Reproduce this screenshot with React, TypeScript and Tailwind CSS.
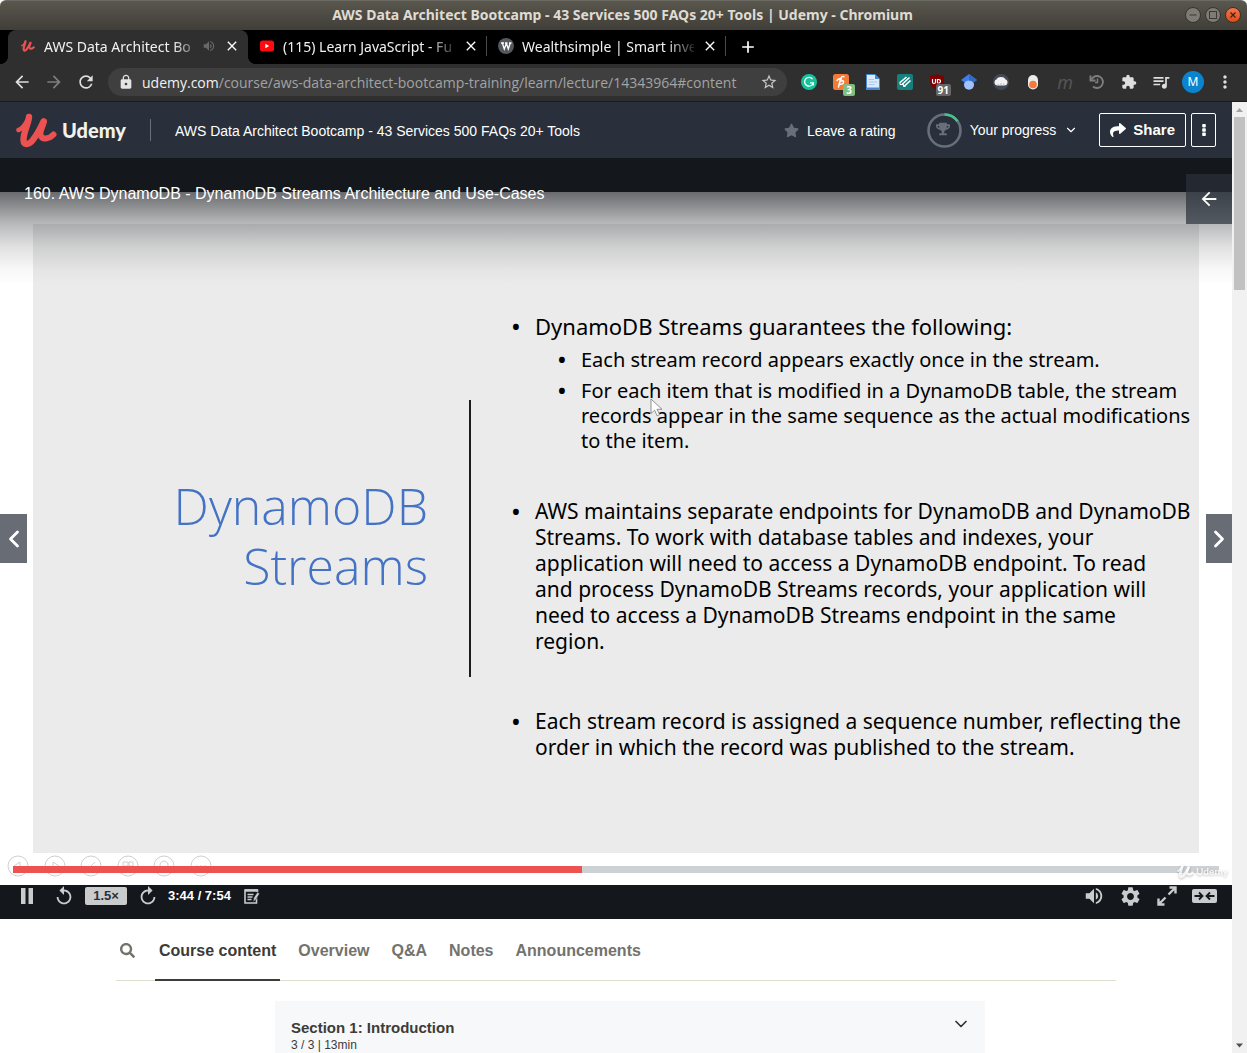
import React from "react";
import {
  MdAdd,
  MdArrowBack,
  MdArrowForward,
  MdClose,
  MdExtension,
  MdLock,
  MdMoreVert,
  MdQueueMusic,
  MdRefresh,
  MdReplay,
  MdSettings,
  MdStarBorder,
  MdVolumeUp,
} from "react-icons/md";
import { FaSearch, FaShare, FaStar, FaTrophy } from "react-icons/fa";
import { ChevronDown, ChevronLeft, ChevronRight } from "lucide-react";

function UdemyMark({ className }: { className: string }) {
  return (
    <svg viewBox="0 0 41 35" className={className} fill="none" aria-hidden="true">
      <g stroke="currentColor" strokeLinecap="round" strokeLinejoin="round">
        <path d="M2.5 17 C7.500 15.500 10.500 9 13.500 3.500" strokeWidth="4.500" />
        <path d="M13 4 C12.500 11 7.500 19 7.500 26.500 C7.500 32.500 12.500 32 16 28 C21 22 24.500 15 27.500 8.500" strokeWidth="6.400" />
        <path d="M28 8.500 C27 13.500 23.500 18 24.500 22 C26 27.500 33 26 37.500 21.500" strokeWidth="6" />
      </g>
    </svg>
  );
}

/* ---------- Window frame ---------- */

function TitleBar() {
  return (
    <header className="flex h-[30px] shrink-0 items-center rounded-t-md border-t border-[#6b6a62] bg-linear-to-b from-[#5a574e] to-[#403e38] pr-1.5 pb-0.5">
      <h1 className="flex-1 pl-[60px] text-center font-['Noto_Sans'] text-[14px] font-bold text-[#dfdbd2]">
        AWS Data Architect Bootcamp - 43 Services 500 FAQs 20+ Tools | Udemy - Chromium
      </h1>
      <div className="flex gap-1">
        <button aria-label="Minimise" className="size-4 rounded-full border border-[#35342f] bg-[#7d7b73] text-[#3a3934]">
          <svg viewBox="0 0 14 14"><path d="M3.5 7h7" stroke="currentColor" /></svg>
        </button>
        <button aria-label="Maximise" className="size-4 rounded-full border border-[#35342f] bg-[#7d7b73] text-[#3a3934]">
          <svg viewBox="0 0 14 14"><rect x="3.5" y="3.5" width="7" height="7" fill="none" stroke="currentColor" /></svg>
        </button>
        <button aria-label="Close window" className="size-4 rounded-full border border-[#43301f] bg-linear-to-b from-[#f4754b] to-[#df4b1a] text-[#4b2010]">
          <svg viewBox="0 0 14 14"><path d="M4.5 4.5l5 5M9.5 4.5l-5 5" stroke="currentColor" strokeWidth="1.3" /></svg>
        </button>
      </div>
    </header>
  );
}

function Tab({ icon, title, active, audio }: { icon: React.ReactNode; title: string; active?: boolean; audio?: boolean }) {
  return (
    <div
      className={
        active
          ? "relative flex h-full w-60 items-center gap-2 rounded-t-lg bg-[#2f2f2f] pr-2 pb-0.5 pl-3"
          : "relative flex h-full w-[239px] items-center gap-2 pr-2 pb-0.5 pl-[11px] after:absolute after:right-0 after:h-5 after:w-px after:bg-[#4a4a4a]"
      }
    >
      {active && (
        <>
          <span className="absolute bottom-0 -left-2 size-2 bg-[radial-gradient(circle_at_0_0,transparent_8px,#2f2f2f_8px)]" />
          <span className="absolute -right-2 bottom-0 size-2 bg-[radial-gradient(circle_at_100%_0,transparent_8px,#2f2f2f_8px)]" />
        </>
      )}
      <span className="flex size-4 shrink-0 items-center justify-center">{icon}</span>
      <button className="min-w-0 flex-1 overflow-hidden text-left text-[14px] whitespace-nowrap text-[#f1f1f1] [mask-image:linear-gradient(to_right,black_84%,rgba(0,0,0,0.15))]">
        {title}
      </button>
      {audio && (
        <button aria-label="Mute tab" className="-ml-1 text-[#68696b]">
          <MdVolumeUp className="size-3.5" />
        </button>
      )}
      <button aria-label="Close tab" className="flex size-4 shrink-0 items-center justify-center text-white">
        <MdClose className="size-4" />
      </button>
    </div>
  );
}

function TabStrip() {
  return (
    <nav aria-label="Browser tabs" className="flex h-[34px] shrink-0 items-center bg-black pl-2">
      <Tab active audio title="AWS Data Architect Bo" icon={<UdemyMark className="w-3.5 text-[#ec5252]" />} />
      <Tab
        title="(115) Learn JavaScript - Fu"
        icon={
          <svg viewBox="0 0 16 16" className="size-4">
            <rect x="1" y="2.5" width="14" height="11" rx="2.5" fill="#ff0a0f" />
            <path d="M6.3 5.8v4.4L10.2 8z" fill="#fff" />
          </svg>
        }
      />
      <Tab
        title="Wealthsimple | Smart inve"
        icon={
          <svg viewBox="0 0 16 16" className="size-4">
            <circle cx="8" cy="8" r="8" fill="#54575c" />
            <path d="M3 5h3M7 5h2.500M11 5h2.500M4.300 5l2 6 2-5.500M8.300 5l2 6 2-6" fill="none" stroke="#fff" strokeWidth="1.300" />
          </svg>
        }
      />
      <button aria-label="New tab" className="ml-3 text-white">
        <MdAdd className="size-5" />
      </button>
    </nav>
  );
}

function Tool({ label, children }: { label: string; children: React.ReactNode }) {
  return (
    <button aria-label={label} className="relative flex h-8 w-8 shrink-0 items-center justify-center text-[#dedede]">
      {children}
    </button>
  );
}

function Toolbar() {
  return (
    <div className="flex h-[38px] shrink-0 items-center border-b border-[#1b1b1b] bg-[#2f2f2f] px-1.5 pb-px">
      <Tool label="Back"><MdArrowBack className="size-5" /></Tool>
      <Tool label="Forward"><MdArrowForward className="size-5 text-[#7e7e7e]" /></Tool>
      <Tool label="Reload"><MdRefresh className="size-5" /></Tool>
      <div className="mx-1.5 flex h-7 min-w-0 flex-1 items-center rounded-full bg-[#3f3f3f] pr-[9px] pl-2.5">
        <MdLock className="size-4 shrink-0 text-[#e4e4e4]" />
        <a href="#content" className="min-w-0 flex-1 truncate pl-2 font-['Open_Sans'] text-[14px] text-[#a3a3a3]">
          <span className="text-[#f2f2f2]">udemy.com</span>
          /course/aws-data-architect-bootcamp-training/learn/lecture/14343964#content
        </a>
        <button aria-label="Bookmark this page" className="text-[#c8c8c8]"><MdStarBorder className="size-[18px]" /></button>
      </div>
      <Tool label="Grammarly">
        <svg viewBox="0 0 16 16" className="size-4">
          <circle cx="8" cy="8" r="8" fill="#15c39a" />
          <path d="M11.600 5.200A4.400 4.400 0 1 0 12.300 8.800H9M12.300 8.800V11.400" fill="none" stroke="#fff" strokeWidth="1.300" />
        </svg>
      </Tool>
      <Tool label="Honey">
        <svg viewBox="0 0 16 16" className="size-4">
          <rect width="16" height="16" rx="2.5" fill="#f47b36" />
          <path d="M5.500 13l2-8.500M7 8c2-2 4-1.500 3.500.5C10 10.500 7.500 10.500 6.500 10M4 6.500c1-1.500 3-2 4.500-1.500M8 4c.5-1.500 2-2 3-1.200" fill="none" stroke="#fff" strokeWidth="1.400" strokeLinecap="round" />
        </svg>
        <span className="absolute right-0.5 bottom-0.5 rounded-[2px] bg-[#7fbf7f] px-[3px] text-[10px] leading-3 font-bold text-white">3</span>
      </Tool>
      <Tool label="Documents">
        <svg viewBox="0 0 16 16" className="size-4">
          <path d="M1.500.5H10l4.500 4.500v10.500h-13z" fill="#dcebfb" stroke="#4a86d0" />
          <path d="M10 .5V5h4.500z" fill="#4a86d0" />
          <path d="M3.500 5.500H9M3.500 8h9M3.500 10.500h6" stroke="#a9c9ee" />
          <path d="M1 13.500h14V16H1z" fill="#4a86d0" />
        </svg>
      </Tool>
      <Tool label="Highlighter">
        <svg viewBox="0 0 16 16" className="size-4">
          <rect width="16" height="16" rx="2" fill="#15807c" />
          <path d="M3 8.500l6.500-5.500M5 10.500l7.500-7M7 12.500l6.500-6" stroke="#fff" strokeWidth="1.600" />
          <path d="M3 8v2.500h3.500v2h2" fill="none" stroke="#fff" />
        </svg>
      </Tool>
      <Tool label="uBlock Origin">
        <svg viewBox="0 0 16 16" className="size-4">
          <path d="M8 0c2 1 4.500 1.500 7 1.500V7c0 4.500-3 7.500-7 9-4-1.500-7-4.500-7-9V1.500C3.500 1.500 6 1 8 0z" fill="#800000" />
          <path d="M3.500 5v3c0 2 3 2 3 0V5M8.500 9.300V5.500h1c2.600 0 2.600 3.600 0 3.600" fill="none" stroke="#fff" strokeWidth="1.200" />
        </svg>
        <span className="absolute right-0.5 bottom-0.5 rounded-[2px] bg-[#666] px-0.5 text-[10px] leading-3 font-bold text-white">91</span>
      </Tool>
      <Tool label="Scholar">
        <svg viewBox="0 0 16 16" className="size-4">
          <circle cx="8" cy="10.800" r="5" fill="#a0c3ff" />
          <path d="M8 0L16 6l-3.500 2.500C10 5.800 6 5.800 3.500 8.500L0 6z" fill="#3f7de8" />
          <path d="M8 0L16 6l-3.500 2.500C11 7 9.500 6.500 8 6.500z" fill="#356ac3" />
        </svg>
      </Tool>
      <Tool label="Shell">
        <svg viewBox="0 0 16 16" className="size-4">
          <circle cx="8" cy="8" r="8" fill="#424a55" />
          <path d="M1.500 8.500c0-2 1-3 2-3 .5-1.700 2.500-2.500 4.500-2.500s4 .8 4.500 2.500c1 0 2 1 2 3 0 1.800-1.500 3-3 3h-7c-1.500 0-3-1.200-3-3z" fill="#f2f2f2" />
          <path d="M8 11.500V9M5.500 11.500L5 9.500M10.500 11.500l.5-2" stroke="#a5a9af" strokeWidth=".8" />
        </svg>
      </Tool>
      <Tool label="Toggle">
        <svg viewBox="0 0 16 16" className="size-4">
          <rect x="3" y="1" width="10" height="14.500" rx="5" fill="#ecebea" />
          <circle cx="8" cy="10.500" r="3.800" fill="#f4793b" />
        </svg>
      </Tool>
      <Tool label="Mercury"><span className="text-[18px] leading-none text-[#555] italic">m</span></Tool>
      <Tool label="History">
        <svg viewBox="0 0 16 16" className="size-4" fill="none" stroke="#7e7e7e" strokeWidth="1.900">
          <path d="M2.500 5.500A6 6 0 1 1 4 12.500" />
          <path d="M1.500 1.500v5h5" />
          <path d="M8.500 4.500v4H6" strokeWidth="1.500" />
        </svg>
      </Tool>
      <Tool label="Extensions"><MdExtension className="size-4" /></Tool>
      <Tool label="Media controls"><MdQueueMusic className="size-5" /></Tool>
      <Tool label="Profile">
        <span className="flex size-[22px] items-center justify-center rounded-full bg-[#0b84d0] text-[12px] text-white">M</span>
      </Tool>
      <Tool label="Menu"><MdMoreVert className="size-5" /></Tool>
    </div>
  );
}

/* ---------- Course page ---------- */

function CourseHeader() {
  return (
    <header className="flex h-14 items-center bg-[#29303b] px-4 text-[14px] text-white">
      <a href="#home" className="flex items-center gap-[5px]">
        <UdemyMark className="w-[41px] text-[#ec5252]" />
        <span className="font-['Lato'] text-[20px] font-black text-[#f2f1ec]">Udemy</span>
      </a>
      <span className="mx-6 h-[22px] w-px bg-[#686f7a]" />
      <a href="#course" className="flex-1 truncate pt-0.5">AWS Data Architect Bootcamp - 43 Services 500 FAQs 20+ Tools</a>
      <button className="flex items-center gap-2">
        <FaStar className="size-[15px] text-[#686f7a]" />
        <span className="pt-0.5">Leave a rating</span>
      </button>
      <button className="ml-[31px] flex items-center gap-2">
        <svg viewBox="0 0 35 35" className="size-[35px]" fill="none">
          <circle cx="17.500" cy="17.500" r="16" stroke="#686f7a" strokeWidth="2.600" />
          <path d="M17.500 1.500A16 16 0 0 1 30.500 8.200" stroke="#46c28e" strokeWidth="2.600" />
          <FaTrophy x="9" y="9" width="17" height="17" color="#686f7a" />
        </svg>
        Your progress
        <ChevronDown className="size-3.5" />
      </button>
      <button className="ml-[21px] flex h-[34px] items-center gap-[7px] rounded-[2px] border border-white px-2.5 text-[15px] font-bold">
        <FaShare className="size-4" />
        Share
      </button>
      <button aria-label="More options" className="ml-[5px] flex h-[34px] w-[25px] items-center justify-center rounded-[2px] border border-white">
        <svg viewBox="0 0 4 14" className="h-3.5" fill="currentColor">
          <rect x=".2" y="1" width="3.600" height="3.400" rx=".8" />
          <rect x=".2" y="5.300" width="3.600" height="3.400" rx=".8" />
          <rect x=".2" y="9.600" width="3.600" height="3.400" rx=".8" />
        </svg>
      </button>
    </header>
  );
}

const bullet = "relative before:absolute before:-left-6 before:top-0 before:text-[26px] before:content-['•']";

function Slide() {
  return (
    <div className="flex aspect-[1166/629] items-center bg-[#ebebeb] font-['Noto_Sans'] text-black">
      <h2 className="w-[395px] pb-1.5 text-right font-['Open_Sans'] text-[50px] leading-[60px] font-light text-[#4472c4]">
        DynamoDB
        <br />
        Streams
      </h2>
      <div className="ml-[41px] h-[277px] w-0.5 bg-[#1d1d1d]" />
      <ul className="ml-16 flex-1 pb-1 text-[21px] leading-[26px] whitespace-nowrap">
        <li className={bullet}>
          <span className="text-[22px]">DynamoDB Streams guarantees the following:</span>
          <ul className="mt-[7px] pl-[46px] text-[20px] leading-[25px]">
            <li className={bullet}>Each stream record appears exactly once in the stream.</li>
            <li className={bullet + " mt-1.5"}>
              For each item that is modified in a DynamoDB table, the stream
              <br />
              records appear in the same sequence as the actual modifications
              <br />
              to the item.
            </li>
          </ul>
        </li>
        <li className={bullet + " mt-[45px]"}>
          AWS maintains separate endpoints for DynamoDB and DynamoDB
          <br />
          Streams. To work with database tables and indexes, your
          <br />
          application will need to access a DynamoDB endpoint. To read
          <br />
          and process DynamoDB Streams records, your application will
          <br />
          need to access a DynamoDB Streams endpoint in the same
          <br />
          region.
        </li>
        <li className={bullet + " mt-[54px]"}>
          Each stream record is assigned a sequence number, reflecting the
          <br />
          order in which the record was published to the stream.
        </li>
      </ul>
    </div>
  );
}

const presenterIcons = [
  "M13 7L7 11l6 4z",
  "M9 7l6 4-6 4z",
  "M7 15l8-8M6 16l3-1",
  "M6 7h5v4H6zM12 7h4v4h-4zM7 13h8",
  "M11 6a4 4 0 1 0 .1 0M14 13l3 3",
  "M6 11h2M10 11h2M14 11h2",
];

function Player() {
  return (
    <section aria-label="Video player" className="relative bg-[#14171c]">
      <div className="h-[34px]" />
      <div className="relative bg-white px-[33px] py-8">
        <Slide />
        <div className="absolute bottom-2 left-[7px] flex w-[205px] justify-between">
          {presenterIcons.map((d) => (
            <svg key={d} viewBox="0 0 22 22" className="w-[22px]" fill="none" stroke="#cfcfcf">
              <circle cx="11" cy="11" r="10" />
              <path d={d} />
            </svg>
          ))}
        </div>
        <input
          type="range"
          aria-label="Seek"
          defaultValue={47}
          className="absolute bottom-3 left-[13px] h-[7px] w-[calc(100%-26px)] appearance-none bg-[linear-gradient(to_right,#ec5252_47.2%,#ced1d4_47.2%)] [&::-webkit-slider-thumb]:size-0 [&::-webkit-slider-thumb]:appearance-none"
        />
        <div className="absolute right-1 bottom-1.5 flex items-center gap-0.5 text-white/80 drop-shadow-[0_1px_1px_rgba(0,0,0,0.3)]">
          <UdemyMark className="w-[17px]" />
          <span className="font-['Lato'] text-[10px] font-black">Udemy</span>
        </div>
        <svg viewBox="0 0 14 20" className="absolute top-[206px] left-[650px] w-3.5">
          <path d="M1 1v14.500l3.600-3.300 2.500 5.600 2.500-1.100-2.500-5.400H12z" fill="#fff" stroke="#777" strokeWidth=".8" />
        </svg>
      </div>
      <div className="flex h-[34px] items-start pr-[15px] pl-[18px] text-[#cacbcd]">
        <div className="flex h-[22px] flex-1 items-center">
          <button aria-label="Pause" className="flex w-[18px] justify-center">
            <svg viewBox="0 0 12 16" className="h-4" fill="currentColor"><path d="M0 0h4.500v16H0zM7.500 0H12v16H7.500z" /></svg>
          </button>
          <button aria-label="Rewind 15 seconds" className="ml-[17px]"><MdReplay className="size-[22px]" /></button>
          <button className="ml-[10px] h-[18px] w-[42px] rounded-[2px] bg-[#cacbcd] text-[13px] leading-[18px] font-bold text-[#29303b]">1.5×</button>
          <button aria-label="Forward 15 seconds" className="ml-[10px]"><MdReplay className="size-[22px] -scale-x-100" /></button>
          <span className="ml-[9px] text-[13px] font-bold text-white">3:44 / 7:54</span>
          <button aria-label="Add note" className="ml-[13px]">
            <svg viewBox="0 0 16 15" className="w-4" fill="none" stroke="currentColor">
              <path d="M12.500 8.500V14H1V1h12.500v2" strokeWidth="1.600" />
              <path d="M1 1.500h12.500" strokeWidth="2.500" />
              <path d="M3.500 5.500h6M3.500 8h5M3.500 10.500h4" strokeWidth="1.300" />
              <path d="M9 13l1-4.500 3.500-5.500 2 1.800-3.500 5.700z" fill="currentColor" stroke="#14171c" strokeWidth=".5" />
            </svg>
          </button>
        </div>
        <div className="flex h-[22px] items-center">
          <button aria-label="Volume"><MdVolumeUp className="size-[22px]" /></button>
          <button aria-label="Settings" className="ml-[14px]"><MdSettings className="size-[23px]" /></button>
          <button aria-label="Full screen" className="ml-[15px]">
            <svg viewBox="0 0 20 20" className="w-5" fill="none" stroke="currentColor" strokeWidth="2.400">
              <path d="M12.500 1.500h6v6M18 2l-6.500 6.500M7.500 18.500h-6v-6M2 18l6.500-6.500" />
            </svg>
          </button>
          <button aria-label="Exit expanded view" className="ml-[15px]">
            <svg viewBox="0 0 25 14" className="w-[25px]">
              <rect width="25" height="14" rx="2" fill="currentColor" />
              <path d="M2.500 7h8M7 3.500L10.500 7 7 10.500M22.500 7h-8M18 3.500L14.500 7l3.500 3.500" fill="none" stroke="#14171c" strokeWidth="1.800" />
            </svg>
          </button>
        </div>
      </div>

      <div className="absolute inset-x-0 top-0 h-[127px] bg-[linear-gradient(to_bottom,rgba(20,23,28,0.9)_0%,rgba(20,23,28,0.64)_27%,rgba(20,23,28,0.31)_51%,rgba(20,23,28,0.13)_70%,rgba(20,23,28,0.03)_88%,transparent)]">
        <h2 className="px-6 pt-[25px] text-[16px] leading-[22px] text-white">
          160. AWS DynamoDB - DynamoDB Streams Architecture and Use-Cases
        </h2>
      </div>
      <button aria-label="Open course sidebar" className="absolute top-4 right-0 flex h-[50px] w-[46px] items-center justify-center bg-[#29303b]/70 text-white">
        <MdArrowBack className="size-[22px]" />
      </button>
      <button aria-label="Previous lecture" className="absolute top-[356px] left-0 flex h-[49px] w-[27px] items-center justify-center bg-[#686c75] text-white">
        <ChevronLeft className="size-7 shrink-0" strokeWidth={2.4} />
      </button>
      <button aria-label="Next lecture" className="absolute top-[356px] right-0 flex h-[49px] w-[26px] items-center justify-center bg-[#686c75] text-white">
        <ChevronRight className="size-7 shrink-0" strokeWidth={2.4} />
      </button>
    </section>
  );
}

function CourseTabs() {
  return (
    <div className="mx-auto max-w-[1000px]">
      <nav aria-label="Course" className="flex h-[62px] items-stretch gap-[22px] border-b border-[#dedfcf] text-[16px] font-bold text-[#73726c]">
        <button aria-label="Search course" className="mr-0.5 pt-0.5 pl-1">
          <FaSearch className="size-[15px]" />
        </button>
        <a href="#content" className="-mx-1 -mb-px border-b-2 border-[#3c3b37] px-1 pt-5 text-[#3c3b37]">Course content</a>
        <a href="#overview" className="pt-5">Overview</a>
        <a href="#qa" className="pt-5">Q&amp;A</a>
        <a href="#notes" className="pt-5">Notes</a>
        <a href="#announcements" className="pt-5">Announcements</a>
      </nav>
      <button className="mt-5 ml-[159px] flex w-[71%] items-start justify-between bg-[#f7f8fa] py-[17px] pr-3.5 pl-4 text-left text-[#3c3b37]">
        <span>
          <span className="block text-[15px] leading-[19px] font-bold">Section 1: Introduction</span>
          <span className="block text-[12px] leading-4">3 / 3 | 13min</span>
        </span>
        <ChevronDown className="-mt-1 size-5 text-[#29303b]" />
      </button>
    </div>
  );
}

function Scrollbar() {
  return (
    <div aria-hidden="true" className="flex w-[15px] shrink-0 flex-col items-center bg-[#f1f1f1]">
      <svg viewBox="0 0 15 15" className="w-[15px]"><path d="M4 10l3.500-4 3.500 4z" fill="#a3a3a3" /></svg>
      <div className="h-[173px] w-[11px] bg-[#c1c1c1]" />
      <svg viewBox="0 0 15 15" className="mt-auto w-[15px]"><path d="M4 5.500h7l-3.500 4z" fill="#505050" /></svg>
    </div>
  );
}

export default function App() {
  return (
    <div className="flex h-screen flex-col overflow-hidden bg-white font-['Noto_Sans',sans-serif]">
      <TitleBar />
      <TabStrip />
      <Toolbar />
      <div className="flex min-h-0 flex-1">
        <main className="min-w-0 flex-1 overflow-hidden font-['Liberation_Sans',sans-serif]">
          <CourseHeader />
          <Player />
          <CourseTabs />
        </main>
        <Scrollbar />
      </div>
    </div>
  );
}
